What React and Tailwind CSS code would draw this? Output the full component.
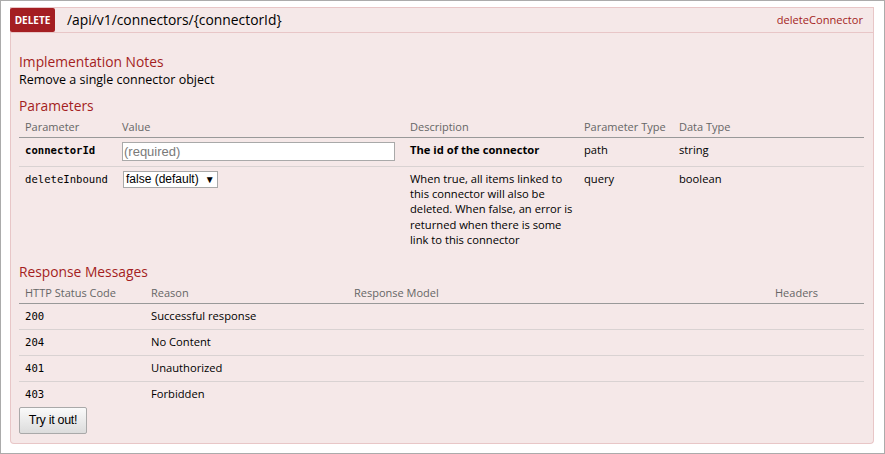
import React from "react";

const sans = { fontFamily: '"Open Sans", "Noto Sans", sans-serif' };
const mono = { fontFamily: '"DejaVu Sans Mono", monospace' };
const arial = { fontFamily: '"Liberation Sans", Arial, sans-serif' };

const params = [
  {
    name: "connectorId",
    bold: true,
    input: "text",
    desc: "The id of the connector",
    descBold: true,
    type: "path",
    dataType: "string",
  },
  {
    name: "deleteInbound",
    bold: false,
    input: "select",
    desc: "When true, all items linked to this connector will also be deleted. When false, an error is returned when there is some link to this connector",
    descBold: false,
    type: "query",
    dataType: "boolean",
  },
];

const responses = [
  ["200", "Successful response"],
  ["204", "No Content"],
  ["401", "Unauthorized"],
  ["403", "Forbidden"],
];

function Heading({ children, className = "" }) {
  return (
    <h4 className={`whitespace-nowrap text-[13.8px] leading-[18px] font-normal text-[#a41e22] ${className}`}>
      {children}
    </h4>
  );
}

function ParamRow({ p, last }) {
  return (
    <div
      className={`grid grid-cols-[97px_288px_174px_95px_1fr] text-[11.2px] text-black ${
        last ? "" : "border-b border-[#d9d2d2]"
      }`}
    >
      <div className="pl-[6px] pt-[3px] leading-[18px]">
        <span className={`text-[10.6px] ${p.bold ? "font-bold" : ""}`} style={mono}>
          {p.name}
        </span>
      </div>
      <div className="pl-[6px] pt-[4px]">
        {p.input === "text" ? (
          <div
            className="h-[19px] w-[273px] border border-[#a9a9a9] bg-white pl-[1px] text-[13px] leading-[17px] text-[#7a7a7a]"
            style={arial}
          >
            (required)
          </div>
        ) : (
          <div
            className="ml-[1px] flex h-[17px] w-[95px] items-center whitespace-nowrap border border-[#a9a9a9] bg-white pl-[2px] text-[12px] leading-[15px] text-black"
            style={arial}
          >
            <span>false (default)</span>
            <span className="ml-[6px] text-[10px]">▼</span>
          </div>
        )}
      </div>
      <div
        className={`pl-[6px] ${
          p.descBold ? "pt-[3px] pb-[7px] font-bold leading-[18px]" : "pt-[4px] pb-[4px] leading-[15.2px]"
        }`}
      >
        {p.desc}
      </div>
      <div className="pl-[6px] pt-[3px] leading-[18px]">{p.type}</div>
      <div className="pl-[6px] pt-[3px] leading-[18px]">{p.dataType}</div>
    </div>
  );
}

export default function App() {
  return (
    <div className="h-[454px] w-[885px] border border-[#ababab] bg-white" style={sans}>
      <div className="ml-[9px] mt-[6px] w-[864px]">
        {/* operation heading */}
        <div className="flex h-[26px] items-center border border-[#e8c6c7] bg-[#f5e8e8]">
          <div className="-ml-px flex h-[24px] w-[45px] items-center justify-center rounded-[2px] bg-[#a41e22] text-[10px] font-bold text-white">
            DELETE
          </div>
          <div className="ml-[12px] whitespace-nowrap text-[13.85px] leading-[20px] text-black">
            /api/v1/connectors/{"{connectorId}"}
          </div>
          <div className="ml-auto mr-[10px] text-[11.1px] leading-[18px] text-[#a41e22]">
            deleteConnector
          </div>
        </div>

        {/* operation content */}
        <div className="rounded-b-[4px] border border-t-0 border-[#e8c6c7] bg-[#f5e8e8] px-[8px] pt-[20px] pb-[9px]">
          <Heading>Implementation Notes</Heading>
          <p className="text-[12.5px] leading-[17px] text-black">Remove a single connector object</p>

          <Heading className="mt-[9px]">Parameters</Heading>
          <div className="w-[845px]">
            <div className="grid grid-cols-[97px_288px_174px_95px_1fr] whitespace-nowrap border-b border-[#999] text-[11px] leading-[16px] text-[#666]">
              <div className="pl-[6px] pt-[4px] pb-[2px]">Parameter</div>
              <div className="pl-[6px] pt-[4px] pb-[2px]">Value</div>
              <div className="pl-[6px] pt-[4px] pb-[2px]">Description</div>
              <div className="pl-[6px] pt-[4px] pb-[2px]">Parameter Type</div>
              <div className="pl-[6px] pt-[4px] pb-[2px]">Data Type</div>
            </div>
            {params.map((p, i) => (
              <ParamRow key={p.name} p={p} last={i === params.length - 1} />
            ))}
          </div>

          <Heading className="mt-[12px]">Response Messages</Heading>
          <div className="w-[845px]">
            <div className="grid grid-cols-[126px_203px_421px_1fr] whitespace-nowrap border-b border-[#999] text-[11px] leading-[16px] text-[#666]">
              <div className="pl-[6px] pt-[4px] pb-[2px]">HTTP Status Code</div>
              <div className="pl-[6px] pt-[4px] pb-[2px]">Reason</div>
              <div className="pl-[6px] pt-[4px] pb-[2px]">Response Model</div>
              <div className="pl-[6px] pt-[4px] pb-[2px]">Headers</div>
            </div>
            {responses.map(([code, reason], i) => (
              <div
                key={code}
                className={`grid grid-cols-[126px_203px_421px_1fr] text-[11.2px] leading-[18px] text-black ${
                  i === responses.length - 1 ? "" : "border-b border-[#d9d2d2]"
                }`}
              >
                <div className="pl-[6px] pt-[3px] pb-[4px]">
                  <span className="text-[10.6px]" style={mono}>
                    {code}
                  </span>
                </div>
                <div className="pl-[6px] pt-[3px] pb-[4px]">{reason}</div>
                <div className="pl-[6px] pt-[3px] pb-[4px]" />
                <div className="pl-[6px] pt-[3px] pb-[4px]" />
              </div>
            ))}
          </div>

          <button
            className="flex h-[27px] w-[68px] items-center justify-center rounded-[2px] border border-[#a9a9a9] bg-gradient-to-b from-[#fafafa] to-[#dcdcdc] text-[12.5px] tracking-[-0.3px] text-black"
            style={arial}
          >
            Try it out!
          </button>
        </div>
      </div>
    </div>
  );
}
